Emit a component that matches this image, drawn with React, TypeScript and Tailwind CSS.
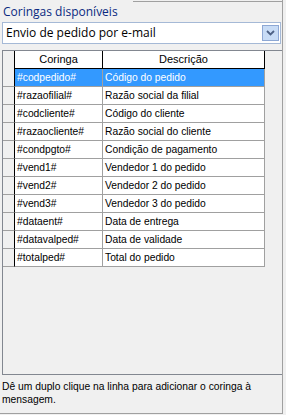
const rows = [
  ["#codpedido#", "Código do pedido"],
  ["#razaofilial#", "Razão social da filial"],
  ["#codcliente#", "Código do cliente"],
  ["#razaocliente#", "Razão social do cliente"],
  ["#condpgto#", "Condição de pagamento"],
  ["#vend1#", "Vendedor 1 do pedido"],
  ["#vend2#", "Vendedor 2 do pedido"],
  ["#vend3#", "Vendedor 3 do pedido"],
  ["#dataent#", "Data de entrega"],
  ["#datavalped#", "Data de validade"],
  ["#totalped#", "Total do pedido"],
];

export default function App() {
  return (
    <div className="w-[286px] h-[415px] bg-[#f0f0f0] font-['Liberation_Sans',sans-serif] text-[10.3px] text-black">
      <div className="w-[283px] h-[414px] border-r border-b border-[#a0a0a0] flex flex-col">
        <div className="ml-[133px] h-px bg-[#a0a0a0] mt-px" />
        {/* label */}
        <div className="pl-[3px] pt-[3px] leading-[14px] text-[12px] font-['Open_Sans',sans-serif] text-[#0a2a80]">
          Coringas disponíveis
        </div>

        {/* combobox */}
        <div className="ml-[2px] mt-[3px] w-[279px] h-[22px] bg-white border border-[#a5b9d6] flex items-center pl-[3px] pr-[1px] text-[12px] font-['Open_Sans',sans-serif]">
          <span className="flex-1 leading-[16px]">Envio de pedido por e-mail</span>
          <span className="w-[17px] h-[16px] border border-[#8ea8d4] bg-[#c8dcf6] flex items-center justify-center">
            <svg width="9" height="6" viewBox="0 0 9 6">
              <path d="M1 1 L4.5 4.5 L8 1" stroke="#4d6185" strokeWidth="1.8" fill="none" />
            </svg>
          </span>
        </div>

        {/* grid */}
        <div className="ml-[2px] mt-[6px] flex-1 max-h-[325px] bg-[#f0f0f0] border-l border-t border-b border-[#828790]">
          <div className="flex h-[18px] text-[11px]">
            <div className="w-[12px] bg-[#f0f0f0] border-r border-black" />
            <div className="w-[88px] bg-white border-r border-b border-black flex items-center justify-center">Coringa</div>
            <div className="w-[162px] bg-white border-r border-b border-black flex items-center justify-center">Descrição</div>
          </div>
          {rows.map(([c, d], i) => (
            <div key={c} className="flex h-[18px]">
              <div className="w-[12px] bg-[#f0f0f0] border-r border-black border-b border-b-[#a0a0a0]" />
              <div
                className={
                  "w-[88px] pl-[2px] flex items-center border-r border-b border-[#a0a0a0] " +
                  (i === 0 ? "bg-[#3399ff] text-white" : "bg-white")
                }
              >
                {c}
              </div>
              <div
                className={
                  "w-[162px] pl-[2px] flex items-center border-r border-b border-[#a0a0a0] " +
                  (i === 0 ? "bg-[#3399ff] text-white" : "bg-white")
                }
              >
                {d}
              </div>
            </div>
          ))}
        </div>

        {/* hint */}
        <div className="pl-[2px] pt-[5px] leading-[13px]">
          Dê um duplo clique na linha para adicionar o coringa à mensagem.
        </div>
      </div>
    </div>
  );
}
